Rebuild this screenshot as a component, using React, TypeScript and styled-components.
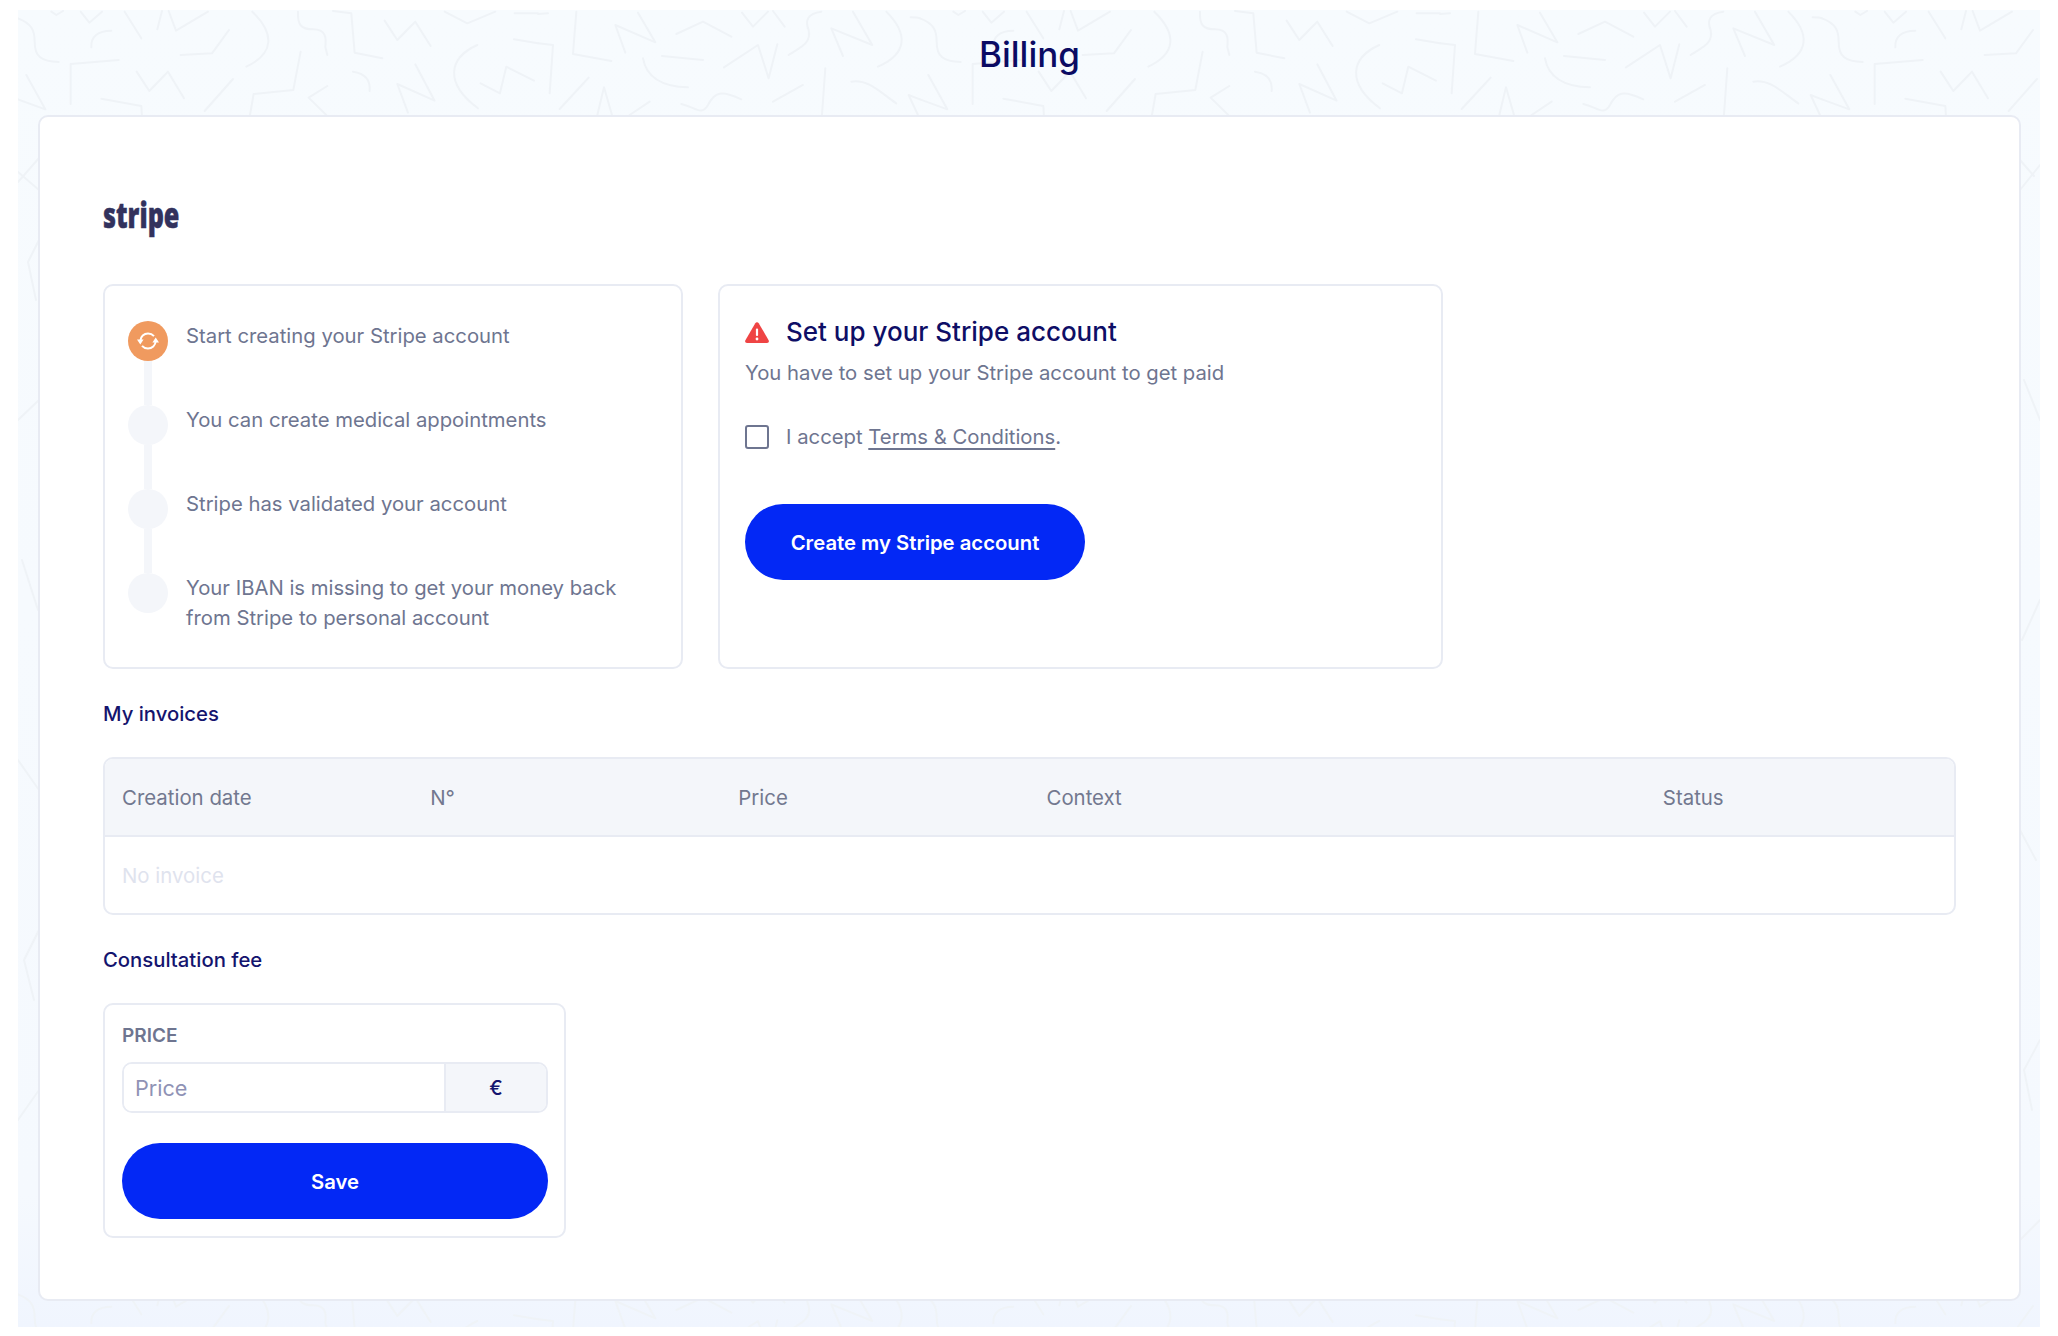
import styled, { createGlobalStyle } from "styled-components";

const GlobalStyle = createGlobalStyle`
  html, body {
    margin: 0;
    padding: 0;
    background: #fff;
    font-family: Inter, "Liberation Sans", sans-serif;
  }
  * {
    box-sizing: border-box;
  }
`;

const Page = styled.div`
  position: relative;
  width: 2022px;
  height: 1317px;
  margin: 10px 0 0 18px;
  padding: 0 19px 0 20px;
  background: linear-gradient(180deg, #f7fbfe 0%, #f5f9fe 90%, #f0f5fe 100%);
  overflow: hidden;
`;

const Doodles = styled.svg`
  position: absolute;
  top: 0;
  left: 0;
  fill: none;
  stroke: #eff3f7;
  stroke-linecap: round;
  stroke-linejoin: round;
`;

const Header = styled.header`
  position: relative;
  height: 105px;
  padding-bottom: 17px;
  display: flex;
  align-items: center;
  justify-content: center;
`;

const Title = styled.h1`
  margin: 0;
  font-size: 35px;
  line-height: 44px;
  font-weight: 500;
  color: #0b0b63;
`;

const Card = styled.main`
  position: relative;
  height: 1186px;
  padding: 62px 63px;
  background: #fff;
  border: 2px solid #e8ebf3;
  border-radius: 10px;
`;

const LogoRow = styled.div`
  height: 105px;
  padding-top: 18px;
`;

const Logo = styled.span`
  display: inline-block;
  font-family: "Open Sans", sans-serif;
  font-weight: 800;
  font-size: 36px;
  line-height: 36px;
  color: #32325d;
  -webkit-text-stroke: 0.5px #32325d;
  transform: scaleX(0.7);
  transform-origin: left center;
`;

const TopRow = styled.div`
  display: flex;
  gap: 35px;
  align-items: stretch;
`;

const Panel = styled.section<{ $width: number }>`
  width: ${({ $width }) => $width}px;
  background: #fff;
  border: 2px solid #e8ebf3;
  border-radius: 10px;
`;

const StepsPanel = styled(Panel)`
  padding: 35px 24px 34px 23px;
`;

const Step = styled.div`
  display: flex;
  gap: 18px;
`;

const Rail = styled.div`
  width: 40px;
  flex: none;
  display: flex;
  flex-direction: column;
  align-items: center;
`;

const Dot = styled.div<{ $active?: boolean }>`
  width: 40px;
  height: 40px;
  border-radius: 50%;
  display: flex;
  align-items: center;
  justify-content: center;
  background: ${({ $active }) => ($active ? "#f09a5f" : "#f4f6fa")};
`;

const Connector = styled.div`
  width: 8px;
  height: 44px;
  background: #f4f6fa;
`;

const StepText = styled.div`
  max-width: 450px;
  font-size: 20.3px;
  line-height: 30px;
  color: #6e7590;
`;

const SetupPanel = styled(Panel)`
  padding: 28px 24px 24px 25px;
  display: flex;
  flex-direction: column;
  align-items: flex-start;
`;

const SetupHeading = styled.div`
  display: flex;
  align-items: center;
  gap: 17px;
`;

const SetupTitle = styled.h2`
  margin: 0;
  font-size: 26px;
  line-height: 36px;
  font-weight: 500;
  color: #0e0e66;
`;

const SetupText = styled.p`
  margin: 8px 0 0;
  font-size: 20.3px;
  line-height: 30px;
  color: #6e7590;
`;

const TermsRow = styled.label`
  display: flex;
  align-items: center;
  gap: 17px;
  margin-top: 34px;
  font-size: 20.3px;
  line-height: 30px;
  color: #6e7590;
`;

const Checkbox = styled.input`
  appearance: none;
  width: 24px;
  height: 24px;
  margin: 0;
  background: #fff;
  border: 2.5px solid #6e7590;
  border-radius: 3px;
`;

const TermsLink = styled.a`
  color: inherit;
  text-decoration: underline;
  text-underline-offset: 4px;
  text-decoration-thickness: 1.5px;
`;

const PrimaryButton = styled.button<{ $wide?: boolean }>`
  width: ${({ $wide }) => ($wide ? "100%" : "340px")};
  height: 76px;
  border: 0;
  border-radius: 38px;
  background: #0328f5;
  color: #fff;
  font-family: inherit;
  font-size: 20.3px;
  font-weight: 600;
`;

const CreateButton = styled(PrimaryButton)`
  margin-top: 52px;
`;

const SectionTitle = styled.h3`
  margin: 30px 0 28px;
  font-size: 20.3px;
  line-height: 30px;
  font-weight: 500;
  color: #14146e;
`;

const Table = styled.div`
  border: 2px solid #e8ebf3;
  border-radius: 10px;
  overflow: hidden;
`;

const TableHead = styled.div`
  display: grid;
  grid-template-columns: 1fr 1fr 1fr 2fr 1fr;
  height: 78px;
  padding-top: 1px;
  align-items: center;
  background: #f4f6fa;
  border-bottom: 2px solid #e8ebf3;
`;

const HeadCell = styled.div`
  padding-left: 17px;
  font-size: 20.4px;
  line-height: 30px;
  color: #72788f;
`;

const EmptyRow = styled.div`
  height: 76px;
  padding-left: 17px;
  display: flex;
  align-items: center;
  font-size: 20.4px;
  color: #dfe3ee;
`;

const FeePanel = styled(Panel)`
  padding: 17px 16px 17px 17px;
`;

const FieldLabel = styled.label`
  display: block;
  font-size: 19px;
  line-height: 27px;
  font-weight: 600;
  color: #6e7590;
`;

const InputGroup = styled.div`
  display: flex;
  height: 51px;
  margin: 13px 0 30px;
  border: 2px solid #e8ebf3;
  border-radius: 10px;
  overflow: hidden;
`;

const PriceInput = styled.input`
  flex: 1;
  min-width: 0;
  padding: 0 11px;
  border: 0;
  outline: 0;
  font-family: inherit;
  font-size: 21.6px;
  color: #0e0e66;

  &::placeholder {
    color: #8f92b5;
    opacity: 1;
  }
`;

const Addon = styled.div`
  width: 102px;
  display: flex;
  align-items: center;
  justify-content: center;
  background: #f4f6fa;
  border-left: 2px solid #e8ebf3;
  font-size: 20px;
  font-weight: 500;
  color: #14146e;
`;

const steps = [
  "Start creating your Stripe account",
  "You can create medical appointments",
  "Stripe has validated your account",
  "Your IBAN is missing to get your money back from Stripe to personal account",
];

const columns = ["Creation date", "N°", "Price", "Context", "Status"];

// traced from the page background, coordinates are 3x zoomed px
const firstStrip = [
  "M0 25C40 40 50 60 50 95C50 140 70 155 122 156",
  "M100 5L115 15L135 3",
  "M188 5L214 38L252 5",
  "M220 112C218 80 240 62 280 62",
  "M320 5L370 85",
  "M418 58L432 3",
  "M452 3L474 62L570 5",
  "M158 282L158 162L302 150",
  "M488 135L582 130L633 60",
  "M703 5C770 70 770 130 685 170",
  "M840 5C838 45 850 58 885 58C925 58 925 85 922 110L928 135",
  "M945 3L1000 10L1010 128L1093 145",
  "M1100 32L1138 90L1192 35L1238 108",
  "M1280 5L1348 40L1432 5",
  "M1490 10L1560 10",
  "M1488 88L1560 100",
  "M1378 105C1290 145 1280 220 1380 295",
  "M25 195L82 298L0 268",
  "M356 185L394 243L450 185L498 265",
  "M250 266L370 288L372 318",
  "M645 207L560 303",
  "M848 125L826 240L707 252L696 315",
  "M1005 185C1040 190 1058 210 1055 243",
  "M928 228L872 263L925 315",
  "M1192 163L1250 272L1138 222L1170 308",
  "M1388 220L1446 250L1465 170L1548 212",
];

const secondStrip = [
  "M0 100L45 105L35 250",
  "M0 12L30 10",
  "M115 5L105 132L220 153",
  "M300 8L352 97L232 45L262 128",
  "M415 72L495 35L580 80",
  "M612 8L645 50L690 5",
  "M705 3L740 50",
  "M850 5C810 10 800 30 812 60C820 100 790 110 752 135",
  "M945 5L1003 105L880 55L915 138",
  "M1045 5C1110 70 1110 130 1020 170",
  "M1118 22C1130 22 1140 23 1146 25",
  "M372 138L495 150",
  "M558 172L660 105L692 205L718 103",
  "M315 145C325 200 370 230 450 232",
  "M152 203L65 297",
  "M178 315L198 232L222 315",
  "M335 275L275 315",
  "M430 282C470 290 490 320 510 285C530 245 550 240 610 268",
  "M705 275L795 225",
  "M862 175L852 315",
  "M940 215C990 205 1030 250 1075 280",
  "M1146 268L1112 255L1140 315",
];

const sideLines = [
  "M18 182L39 158",
  "M18 172L39 190",
  "M39 240L28 262L36 300",
  "M18 420L39 400",
  "M22 560L38 610",
  "M18 760L39 790",
  "M39 930L24 960L34 1000",
  "M18 1120L39 1090",
  "M2020 160L2034 176",
  "M2020 190L2040 165",
  "M2024 380L2040 420",
  "M2040 600L2022 640",
  "M2020 830L2036 860",
  "M2040 1040L2024 1070L2032 1110",
  "M2020 1240L2040 1220",
];

const BackgroundDoodles = () => (
  <Doodles width={2022} height={1317} viewBox="18 10 2022 1317" strokeWidth={2}>
    <defs>
      <g id="doodle-tile">
        <g transform="translate(18 10) scale(0.3333)" strokeWidth={6}>
          {firstStrip.map((d) => (
            <path key={d} d={d} />
          ))}
        </g>
        <g transform="translate(538 10) scale(0.3333)" strokeWidth={6}>
          {secondStrip.map((d) => (
            <path key={d} d={d} />
          ))}
        </g>
      </g>
    </defs>
    {[0, 902, 1804].map((x) =>
      [0, 1276].map((y) => (
        <use key={`${x}-${y}`} href="#doodle-tile" x={x} y={y} />
      ))
    )}
    {sideLines.map((d) => (
      <path key={d} d={d} />
    ))}
  </Doodles>
);

const SyncIcon = () => (
  <svg width="22" height="18" viewBox="0 0 22 18">
    <path
      d="M3.2 9C3.6 4.6 7 1.5 11 1.5C13.4 1.5 15.5 2.5 17 4.2M18.8 9C18.4 13.4 15 16.5 11 16.5C8.6 16.5 6.5 15.5 5 13.8"
      fill="none"
      stroke="#fff"
      strokeWidth="2"
    />
    <path d="M0 7.6H6.6L3.3 12.4Z M15.4 10.4H22L18.7 5.6Z" fill="#fff" />
  </svg>
);

const WarningIcon = () => (
  <svg width="24" height="21" viewBox="0 0 24 21">
    <path
      d="M10.3 1.2C11 0 13 0 13.7 1.2L23.6 18.2C24.4 19.6 23.5 21 22 21H2C0.5 21 -0.4 19.6 0.4 18.2Z"
      fill="#ef4444"
    />
    <rect x="10.9" y="6.5" width="2.2" height="7.5" rx="1" fill="#fff" />
    <circle cx="12" cy="17" r="1.4" fill="#fff" />
  </svg>
);

const App = () => {
  return (
    <Page>
      <GlobalStyle />
      <BackgroundDoodles />
      <Header>
        <Title>Billing</Title>
      </Header>
      <Card>
        <LogoRow>
          <Logo>stripe</Logo>
        </LogoRow>

        <TopRow>
          <StepsPanel $width={580}>
            {steps.map((text, index) => (
              <Step key={text}>
                <Rail>
                  <Dot $active={index === 0}>{index === 0 && <SyncIcon />}</Dot>
                  {index < steps.length - 1 && <Connector />}
                </Rail>
                <StepText>{text}</StepText>
              </Step>
            ))}
          </StepsPanel>

          <SetupPanel $width={725}>
            <SetupHeading>
              <WarningIcon />
              <SetupTitle>Set up your Stripe account</SetupTitle>
            </SetupHeading>
            <SetupText>You have to set up your Stripe account to get paid</SetupText>
            <TermsRow>
              <Checkbox type="checkbox" />
              <span>
                I accept <TermsLink href="#">Terms &amp; Conditions</TermsLink>.
              </span>
            </TermsRow>
            <CreateButton>Create my Stripe account</CreateButton>
          </SetupPanel>
        </TopRow>

        <SectionTitle>My invoices</SectionTitle>
        <Table>
          <TableHead>
            {columns.map((column) => (
              <HeadCell key={column}>{column}</HeadCell>
            ))}
          </TableHead>
          <EmptyRow>No invoice</EmptyRow>
        </Table>

        <SectionTitle>Consultation fee</SectionTitle>
        <FeePanel $width={463}>
          <FieldLabel>PRICE</FieldLabel>
          <InputGroup>
            <PriceInput placeholder="Price" />
            <Addon>€</Addon>
          </InputGroup>
          <PrimaryButton $wide>Save</PrimaryButton>
        </FeePanel>
      </Card>
    </Page>
  );
};

export default App;
